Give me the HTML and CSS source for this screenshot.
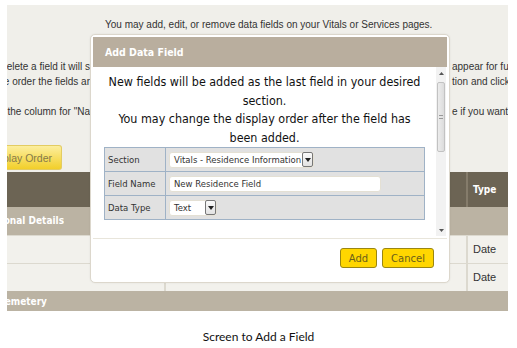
FILE: index.html
```html
<!DOCTYPE html>
<html>
<head>
  <title>Screen to Add a Field</title>
  <link rel="stylesheet" href="styles.css">
</head>
<body>
  <div class="screen">
    <p class="intro">You may add, edit, or remove data fields on your Vitals or Services pages.</p>

    <div class="notes">
      <div class="note-line">
        <div class="note-left"><span>When you delete a field it will s</span></div>
        <div class="note-right">appear for future records</div>
      </div>
      <div class="note-line">
        <div class="note-left"><span>To change the order the fields ar</span></div>
        <div class="note-right">tion and click Save</div>
      </div>
      <div class="note-line blank"></div>
      <div class="note-line">
        <div class="note-left"><span>Uncheck the column for "Na</span></div>
        <div class="note-right">e if you want to hide it</div>
      </div>
    </div>

    <div class="toolbar">
      <div class="btn-order"><span>Display Order</span></div>
    </div>

    <div class="grid">
      <div class="grid-head">
        <div class="cell"></div>
        <div class="cell"></div>
        <div class="cell head-type">Type</div>
      </div>
      <div class="grid-group">
        <div class="group-label personal"><span>Personal Details</span></div>
      </div>
      <div class="grid-row">
        <div class="cell"></div>
        <div class="cell"></div>
        <div class="cell">Date</div>
      </div>
      <div class="grid-row">
        <div class="cell"></div>
        <div class="cell"></div>
        <div class="cell">Date</div>
      </div>
      <div class="grid-group last">
        <div class="group-label cemetery"><span>Cemetery</span></div>
      </div>
    </div>

    <!-- modal dialog -->
    <div class="dialog">
      <div class="dialog-title">Add Data Field</div>
      <div class="dialog-body">
        <div class="dialog-content">
          <p class="dialog-msg">New fields will be added as the last field in your desired<br>section.<br>You may change the display order after the field has<br>been added.</p>
          <table class="field-table">
            <tr>
              <td class="label">Section</td>
              <td>
                <div class="select wide">
                  <span>Vitals - Residence Information</span>
                  <span class="select-btn"><svg width="6" height="4" viewBox="0 0 6 4"><path d="M0 0h6L3 4z" fill="#222"/></svg></span>
                </div>
              </td>
            </tr>
            <tr>
              <td class="label">Field Name</td>
              <td><div class="textbox">New Residence Field</div></td>
            </tr>
            <tr>
              <td class="label">Data Type</td>
              <td>
                <div class="select narrow">
                  <span>Text</span>
                  <span class="select-btn"><svg width="6" height="4" viewBox="0 0 6 4"><path d="M0 0h6L3 4z" fill="#222"/></svg></span>
                </div>
              </td>
            </tr>
          </table>
        </div>
        <div class="scrollbar">
          <div class="arrow"><svg width="5" height="3" viewBox="0 0 5 3"><path d="M0 3h5L2.5 0z" fill="#555"/></svg></div>
          <div class="track">
            <div class="thumb"><span class="grip"></span></div>
          </div>
          <div class="arrow"><svg width="5" height="3" viewBox="0 0 5 3"><path d="M0 0h5L2.5 3z" fill="#555"/></svg></div>
        </div>
      </div>
      <div class="dialog-footer">
        <button class="btn-yellow">Add</button>
        <button class="btn-yellow">Cancel</button>
      </div>
    </div>
  </div>

  <p class="caption">Screen to Add a Field</p>
</body>
</html>
```

FILE: styles.css
```css
/* page frame */
body {
  margin: 0;
  background-color: #fff;
  font-family: "Liberation Sans", Arial, sans-serif;
}

.screen {
  position: relative;
  width: 501px;
  height: 306px;
  margin: 5px 0 0 7px;
  background-color: #f0efea;
  overflow: hidden;
  color: #333;
  font-size: 10px;
}

.intro {
  margin: 0;
  padding: 13px 0 0 98px;
  line-height: 14px;
  white-space: nowrap;
}

/* background notes, partly hidden by the dialog */
.notes {
  margin-top: 27px;
}

.note-line {
  display: flex;
  height: 15px;
  line-height: 15px;
  white-space: nowrap;
}

.note-left {
  flex: 0 0 83px;
  display: flex;
  justify-content: flex-end;
  overflow: hidden;
}

.note-right {
  flex: 0 0 auto;
  margin-left: 362px;
}

.toolbar {
  margin-top: 26px;
  height: 25px;
}

.btn-order {
  width: 55px;
  height: 25px;
  display: flex;
  justify-content: flex-end;
  align-items: center;
  overflow: hidden;
  background: linear-gradient(#fcee9e, #f2cf2a);
  border: 1px solid #e3cc62;
  border-left: none;
  border-radius: 0 3px 3px 0;
  box-sizing: border-box;
  padding-right: 9px;
  color: #857a4a;
  font-size: 10.5px;
  white-space: nowrap;
}

/* data grid */
.grid {
  margin-top: 2px;
}

.grid-head,
.grid-row {
  display: grid;
  grid-template-columns: 157px 302px 42px;
}

.grid-head {
  height: 35px;
  background-color: #6c6454;
}

.grid-head .cell + .cell {
  border-left: 2px solid #857c6b;
}

.head-type {
  color: #fff;
  font-family: "DejaVu Sans Condensed", "DejaVu Sans", sans-serif;
  font-weight: bold;
  font-size: 10px;
  line-height: 35px;
  padding-left: 5px;
}

.grid-group {
  height: 28px;
  display: flex;
  background-color: #bbb3a3;
  color: #fff;
  font-family: "DejaVu Sans Condensed", "DejaVu Sans", sans-serif;
  font-weight: bold;
  font-size: 10px;
  line-height: 28px;
  white-space: nowrap;
}

.grid-group.last {
  height: 21px;
  line-height: 21px;
}

.group-label {
  display: flex;
  justify-content: flex-end;
  overflow: hidden;
}

.group-label.personal {
  flex: 0 0 57px;
}

.group-label.cemetery {
  flex: 0 0 40px;
}

.grid-row {
  height: 28px;
  border-top: 1px solid #dcd9cf;
  box-sizing: border-box;
  background-color: #f2f1ec;
  font-size: 11px;
}

.grid-row .cell {
  line-height: 27px;
}

.grid-row .cell + .cell {
  border-left: 2px solid #dcd9cf;
}

.grid-row .cell:last-child {
  padding-left: 5px;
}

/* dialog */
.dialog {
  position: absolute;
  left: 83px;
  top: 29px;
  width: 360px;
  height: 249px;
  box-sizing: border-box;
  padding: 2px;
  background-color: #fff;
  border: 1px solid #dcd7cc;
  border-radius: 5px;
  display: flex;
  flex-direction: column;
  box-shadow: 0 0 2px rgba(0, 0, 0, 0.08);
}

.dialog-title {
  height: 30px;
  line-height: 30px;
  padding-left: 12px;
  background-color: #b9ae9e;
  color: #fff;
  font-family: "DejaVu Sans Condensed", "DejaVu Sans", sans-serif;
  font-weight: bold;
  font-size: 10.5px;
}

.dialog-body {
  display: flex;
  height: 169px;
}

.dialog-content {
  flex: 1;
  padding: 6px 0 0 11px;
}

.dialog-msg {
  margin: 0 0 0 -11px;
  text-align: center;
  color: #111;
  font-family: "DejaVu Sans Condensed", "DejaVu Sans", sans-serif;
  font-size: 12.4px;
  line-height: 18.5px;
  white-space: nowrap;
}

.field-table {
  border-collapse: collapse;
  width: 321px;
  background-color: #e1e1e1;
  border: 1px solid #9fb2c6;
  font-family: "DejaVu Sans", Verdana, sans-serif;
  font-size: 8.5px;
  color: #333;
}

.field-table td {
  height: 23px;
  padding: 0 3px;
  border-top: 1px solid #9fb2c6;
}

.field-table td.label {
  width: 54px;
  border-right: 1px solid #9fb2c6;
}

.select,
.textbox {
  display: flex;
  align-items: center;
  height: 16px;
  background-color: #fff;
  border: 1px solid #e4e0d4;
  border-radius: 3px;
  box-sizing: border-box;
  padding-left: 4px;
}

.select {
  justify-content: space-between;
  padding-right: 0;
}

.select.wide {
  width: 145px;
}

.select.narrow {
  width: 48px;
}

.textbox {
  width: 212px;
}

.select-btn {
  width: 11px;
  height: 15px;
  display: flex;
  align-items: center;
  justify-content: center;
  background: linear-gradient(#fafafa, #e2e2e2);
  border: 1px solid #777;
  border-radius: 2px;
  box-sizing: border-box;
}

.scrollbar {
  width: 10px;
  margin-right: 1px;
  display: flex;
  flex-direction: column;
  background-color: #f2f2f2;
}

.arrow {
  height: 12px;
  display: flex;
  align-items: center;
  justify-content: center;
}

.track {
  flex: 1;
  padding-top: 3px;
}

.thumb {
  height: 68px;
  margin: 0 1px;
  background: linear-gradient(90deg, #ececec, #dcdcdc);
  border: 1px solid #c2c2c2;
  border-radius: 2px;
  display: flex;
  align-items: center;
  justify-content: center;
}

.grip {
  width: 4px;
  height: 4px;
  border-top: 1px solid #999;
  border-bottom: 1px solid #999;
  box-sizing: border-box;
}

.dialog-footer {
  flex: 1;
  border-top: 1px solid #e8e5db;
  margin-top: 2px;
  display: flex;
  justify-content: flex-end;
  align-items: flex-start;
  gap: 5px;
  padding: 9px 13px 0 0;
}

.btn-yellow {
  height: 20px;
  padding: 0 8px;
  background-color: #ffd600;
  border: 1px solid #9a8612;
  border-radius: 3px;
  color: #6b5f1a;
  font-family: "DejaVu Sans", Verdana, sans-serif;
  font-size: 10px;
  cursor: pointer;
}

.caption {
  margin: 19px 0 0;
  text-align: center;
  font-family: Lato, "Open Sans", sans-serif;
  font-size: 12px;
  line-height: 14px;
  color: #111;
}
```
